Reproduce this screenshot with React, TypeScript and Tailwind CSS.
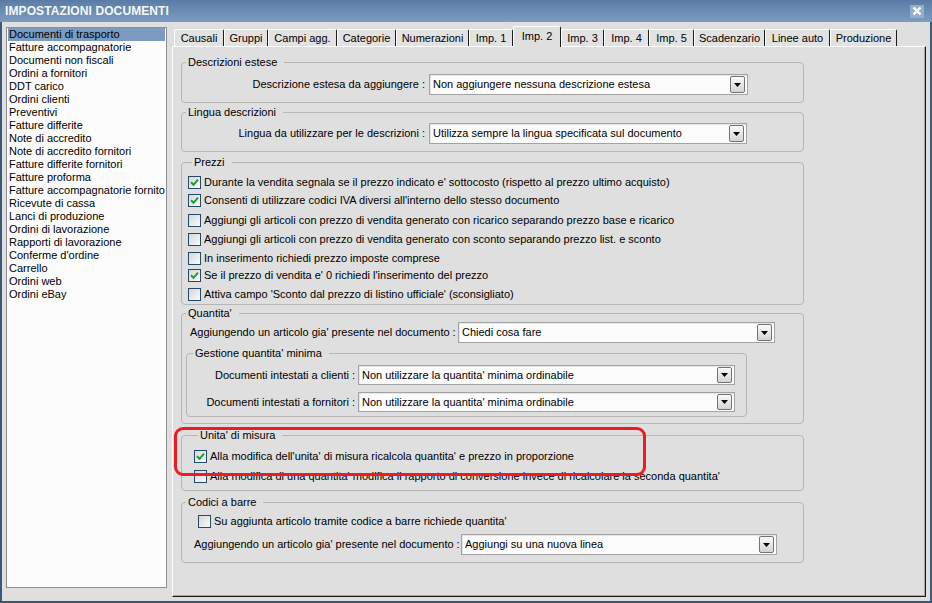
import React from "react";

const docs = [
  "Documenti di trasporto",
  "Fatture accompagnatorie",
  "Documenti non fiscali",
  "Ordini a fornitori",
  "DDT carico",
  "Ordini clienti",
  "Preventivi",
  "Fatture differite",
  "Note di accredito",
  "Note di accredito fornitori",
  "Fatture differite fornitori",
  "Fatture proforma",
  "Fatture accompagnatorie fornitori",
  "Ricevute di cassa",
  "Lanci di produzione",
  "Ordini di lavorazione",
  "Rapporti di lavorazione",
  "Conferme d'ordine",
  "Carrello",
  "Ordini web",
  "Ordini eBay",
];

const tabs = [
  { label: "Causali", w: "w-[50px]" },
  { label: "Gruppi", w: "w-[44px]" },
  { label: "Campi agg.", w: "w-[69px]" },
  { label: "Categorie", w: "w-[59px]" },
  { label: "Numerazioni", w: "w-[73px]" },
  { label: "Imp. 1", w: "w-[44px]" },
  { label: "Imp. 2", w: "w-[48px]", active: true },
  { label: "Imp. 3", w: "w-[43px]" },
  { label: "Imp. 4", w: "w-[45px]" },
  { label: "Imp. 5", w: "w-[45px]" },
  { label: "Scadenzario", w: "w-[71px]" },
  { label: "Linee auto", w: "w-[65px]" },
  { label: "Produzione", w: "w-[67px]" },
];

const prezzi = [
  { text: "Durante la vendita segnala se il prezzo indicato e' sottocosto (rispetto al prezzo ultimo acquisto)", on: true, mt: "mt-[6px]" },
  { text: "Consenti di utilizzare codici IVA diversi all'interno dello stesso documento", on: true, mt: "mt-[4px]" },
  { text: "Aggiungi gli articoli con prezzo di vendita generato con ricarico separando prezzo base e ricarico", on: false, mt: "mt-[6px]" },
  { text: "Aggiungi gli articoli con prezzo di vendita generato con sconto separando prezzo list. e sconto", on: false, mt: "mt-[5px]" },
  { text: "In inserimento richiedi prezzo imposte comprese", on: false, mt: "mt-[5px]" },
  { text: "Se il prezzo di vendita e' 0 richiedi l'inserimento del prezzo", on: true, mt: "mt-[3px]" },
  { text: "Attiva campo 'Sconto dal prezzo di listino ufficiale' (sconsigliato)", on: false, mt: "mt-[5px]" },
];

function Check({ checked }: { checked?: boolean }) {
  return (
    <span className="w-[13px] h-[13px] shrink-0 border border-[#24496a] bg-linear-to-br from-[#d6d6d6] to-[#fbfbfb] flex items-center justify-center">
      {checked && (
        <svg width="9" height="9" viewBox="0 0 9 9">
          <path d="M1 4.3 L3.5 6.8 L8 1.6" fill="none" stroke="#1f9e2b" strokeWidth="2" />
        </svg>
      )}
    </span>
  );
}

function Combo({ value, className, small }: { value: string; className: string; small?: boolean }) {
  return (
    <div className={`${className} flex items-center bg-[#fcfcfc] border border-[#a3a3a3] shadow-[inset_1px_1px_0_#e6e6e6] pl-[3px] pr-[2px]`}>
      <span className="flex-1 whitespace-nowrap overflow-hidden">{value}</span>
      <span
        className={`${small ? "h-[16px]" : "h-[17px]"} w-[15px] rounded-[2px] border border-[#737373] bg-linear-to-b from-[#fbfbfb] to-[#d3d3d3] flex items-center justify-center`}
      >
        <svg width="7" height="4" viewBox="0 0 7 4">
          <path d="M0 0h7L3.5 4z" fill="#000" />
        </svg>
      </span>
    </div>
  );
}

function Legend({ children, inner }: { children: React.ReactNode; inner?: boolean }) {
  return (
    <legend className={`${inner ? "ml-[6px]" : "ml-[4px]"} pl-[2px] pr-[7px] leading-[13px]`}>{children}</legend>
  );
}

export default function App() {
  return (
    <div className="w-[932px] h-[603px] bg-[#3b5878] flex flex-col px-[2px] pb-[2px] font-['Liberation_Sans',Arial,sans-serif] text-[11px] text-black overflow-hidden">
      {/* title bar */}
      <div className="h-[22px] -mx-[2px] bg-linear-to-b from-[#5a7ca4] to-[#7d9cc2] flex items-center justify-between pl-[5px] pr-[8px]">
        <span className="text-[12px] font-bold text-[#f5f7fa] tracking-[0.1px]">IMPOSTAZIONI DOCUMENTI</span>
        <span className="w-[14px] h-[13px] bg-[#93aecd] flex items-center justify-center">
          <svg width="10" height="10" viewBox="0 0 10 10">
            <path d="M1.5 1.5 L8.5 8.5 M8.5 1.5 L1.5 8.5" stroke="#fff" strokeWidth="2.4" />
          </svg>
        </span>
      </div>

      <div className="flex-1 bg-[#dfdfdf] flex">
        {/* document list */}
        <div className="ml-[4px] mt-[5px] w-[161px] h-[561px] bg-[#fcfcfc] border border-[#8f8f8f] px-px overflow-hidden">
          {docs.map((d, i) => (
            <div
              key={d}
              className={`h-[13px] leading-[13px] pl-[1px] whitespace-nowrap overflow-hidden ${i === 0 ? "bg-[#7b9bc1]" : ""}`}
            >
              {d}
            </div>
          ))}
        </div>

        {/* tabs + panel */}
        <div className="ml-[5px] flex flex-col">
          <div className="mt-[4px] h-[20px] flex items-end pl-[2px]">
            {tabs.map((t) =>
              t.active ? (
                <div
                  key={t.label}
                  className={`${t.w} h-[21px] -mb-px relative z-10 bg-[#dfdfdf] border-t border-l border-white border-r border-r-[#1c1c1c] rounded-t-[2px] flex items-center justify-center pb-[2px]`}
                >
                  {t.label}
                </div>
              ) : (
                <div
                  key={t.label}
                  className={`${t.w} h-[17px] bg-[#e2e2e2] border-t border-l border-white border-r border-r-[#1c1c1c] rounded-t-[2px] flex items-center justify-center`}
                >
                  {t.label}
                </div>
              )
            )}
          </div>

          <div className="w-[754px] h-[551px] bg-[#dfdfdf] border-t border-l border-white border-r border-b border-r-[#1a1a1a] border-b-[#1a1a1a] shadow-[inset_-1px_-1px_0_#a8a8a8] pl-[8px] pt-[9px]">
            {/* Descrizioni estese */}
            <fieldset className="w-[623px] border border-[#b6b6b6] rounded-[4px] pt-[5px] pb-[7px]">
              <Legend>Descrizioni estese</Legend>
              <div className="flex items-center">
                <span className="w-[243px] text-right whitespace-nowrap">Descrizione estesa da aggiungere :</span>
                <Combo className="ml-[4px] w-[319px] h-[21px]" value="Non aggiungere nessuna descrizione estesa" />
              </div>
            </fieldset>

            {/* Lingua descrizioni */}
            <fieldset className="mt-[3px] w-[623px] border border-[#b6b6b6] rounded-[4px] pt-[4px] pb-[7px]">
              <Legend>Lingua descrizioni</Legend>
              <div className="flex items-center">
                <span className="w-[243px] text-right whitespace-nowrap">Lingua da utilizzare per le descrizioni :</span>
                <Combo className="ml-[4px] w-[318px] h-[21px]" value="Utilizza sempre la lingua specificata sul documento" />
              </div>
            </fieldset>

            {/* Prezzi */}
            <fieldset className="mt-[4px] w-[623px] border border-[#b6b6b6] rounded-[4px] pl-[6px] pb-[3px]">
              <Legend>Prezzi</Legend>
              {prezzi.map((p) => (
                <div key={p.text} className={`${p.mt} h-[14px] flex items-center gap-[3px] whitespace-nowrap`}>
                  <Check checked={p.on} />
                  <span>{p.text}</span>
                </div>
              ))}
            </fieldset>

            {/* Quantita' */}
            <fieldset className="mt-[2px] w-[623px] border border-[#b6b6b6] rounded-[4px] pt-[2px] pb-[6px]">
              <Legend>Quantita'</Legend>
              <div className="flex items-center">
                <span className="ml-[8px] w-[265px] whitespace-nowrap">Aggiungendo un articolo gia' presente nel documento :</span>
                <Combo className="ml-[3px] w-[317px] h-[21px]" value="Chiedi cosa fare" />
              </div>
              <fieldset className="mt-[4px] ml-[4px] w-[561px] border border-[#b6b6b6] rounded-[4px] pt-[5px] pb-[4px]">
                <Legend inner>Gestione quantita' minima</Legend>
                <div className="flex items-center">
                  <span className="w-[168px] text-right whitespace-nowrap">Documenti intestati a clienti :</span>
                  <Combo small className="ml-[3px] w-[377px] h-[20px]" value="Non utilizzare la quantita' minima ordinabile" />
                </div>
                <div className="mt-[7px] flex items-center">
                  <span className="w-[168px] text-right whitespace-nowrap">Documenti intestati a fornitori :</span>
                  <Combo small className="ml-[3px] w-[377px] h-[20px]" value="Non utilizzare la quantita' minima ordinabile" />
                </div>
              </fieldset>
            </fieldset>

            {/* Unita' di misura */}
            <div className="relative mt-[5px]">
              <fieldset className="w-[623px] border border-[#b6b6b6] rounded-[4px] pl-[12px] pt-[7px] pb-[7px]">
                <Legend>Unita' di misura</Legend>
                <div className="h-[14px] flex items-center gap-[3px] whitespace-nowrap">
                  <Check checked />
                  <span>Alla modifica dell'unita' di misura ricalcola quantita' e prezzo in proporzione</span>
                </div>
                <div className="mt-[6px] h-[14px] flex items-center gap-[3px] whitespace-nowrap">
                  <Check />
                  <span>Alla modifica di una quantita' modifica il rapporto di conversione invece di ricalcolare la seconda quantita'</span>
                </div>
              </fieldset>
              <div className="absolute left-[-7px] top-[-2px] w-[472px] h-[49px] border-[3px] border-[#ec1b24] rounded-[9px] pointer-events-none" />
            </div>

            {/* Codici a barre */}
            <fieldset className="mt-[5px] w-[623px] border border-[#b6b6b6] rounded-[4px] pt-[5px] pb-[7px]">
              <Legend>Codici a barre</Legend>
              <div className="ml-[16px] h-[14px] flex items-center gap-[3px] whitespace-nowrap">
                <Check />
                <span>Su aggiunta articolo tramite codice a barre richiede quantita'</span>
              </div>
              <div className="mt-[6px] flex items-center">
                <span className="ml-[12px] w-[263px] whitespace-nowrap">Aggiungendo un articolo gia' presente nel documento :</span>
                <Combo className="ml-[4px] w-[316px] h-[21px]" value="Aggiungi su una nuova linea" />
              </div>
            </fieldset>
          </div>
        </div>
      </div>
    </div>
  );
}
